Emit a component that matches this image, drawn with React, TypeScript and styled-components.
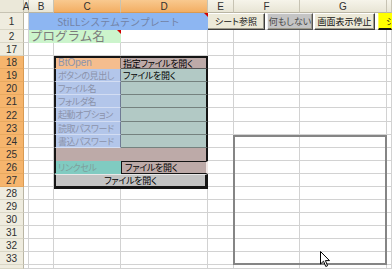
import React from "react"
import styled, { createGlobalStyle, css } from "styled-components"

const GlobalStyle = createGlobalStyle`
  html, body {
    margin: 0;
    padding: 0;
    background: #ffffff;
    overflow: hidden;
  }
`

const COLS = ["A", "B", "C", "D", "E", "F", "G", "H"]
const SELECTED_COLS = ["C", "D"]
const ROWS = [1, 2, 17, 18, 19, 20, 21, 22, 23, 24, 25, 26, 27, 28, 29, 30, 31, 32, 33, 34]
const rowHeight = (r: number) => (r === 1 ? "17px" : r === 22 ? "14px" : r === 34 ? "1fr" : "13px")

const JP = `"Noto Sans CJK JP", "Liberation Sans", sans-serif`

export default function App() {
  return (
    <>
      <GlobalStyle />
      <Sheet>
        <Corner />
        {COLS.map((c, i) => (
          <ColHeader key={c} $c={i + 2} $selected={SELECTED_COLS.includes(c)}>
            {c === "H" ? "" : c}
          </ColHeader>
        ))}
        {ROWS.map((r, ri) => (
          <React.Fragment key={r}>
            <RowHeader $r={ri + 2} $selected={r >= 18 && r <= 27}>
              {r === 34 ? "" : r}
            </RowHeader>
            {COLS.map((c, ci) => (
              <Cell key={c} $r={ri + 2} $c={ci + 2} />
            ))}
          </React.Fragment>
        ))}

        <Title>StiLLシステムテンプレート</Title>
        <ProgName>プログラム名</ProgName>

        <Toolbar>
          <SheetButton $w={58}>シート参照</SheetButton>
          <SheetButton $w={46} $kind="gray">何もしない</SheetButton>
          <SheetButton $w={61}>画面表示停止</SheetButton>
          <SheetButton $w={14} $kind="yellow">シ</SheetButton>
        </Toolbar>

        <Table>
          <Label $tone="peach" $latin>BtOpen</Label>
          <Value $tone="mauve" $first>指定ファイルを開く</Value>
          <Label $tone="blue">ボタンの見出し</Label>
          <Value $tone="teal">ファイルを開く</Value>
          <Label $tone="blue">ファイル名</Label>
          <Value $tone="teal" />
          <Label $tone="blue">フォルダ名</Label>
          <Value $tone="teal" />
          <Label $tone="blue">起動オプション</Label>
          <Value $tone="teal" />
          <Label $tone="blue">読取パスワード</Label>
          <Value $tone="teal" />
          <Label $tone="blue">書込パスワード</Label>
          <Value $tone="teal" />
          <Spacer />
          <Label $tone="link">リンクセル</Label>
          <LinkValue>ファイルを開く</LinkValue>
          <OpenButton>ファイルを開く</OpenButton>
        </Table>

        <ListFrame />
        <Cursor width="11" height="17" viewBox="0 0 11 17">
          <path d="M0.5 0.5 L0.5 13 L3.5 10.2 L5.8 15.5 L7.6 14.7 L5.4 9.6 L9.5 9.6 Z" fill="#ffffff" stroke="#000000" strokeWidth="1" />
        </Cursor>
      </Sheet>
    </>
  )
}

const Sheet = styled.div`
  position: relative;
  width: 392px;
  height: 269px;
  overflow: hidden;
  display: grid;
  grid-template-columns: 24px 5px 25px 67px 87px 26px 66px 87px 1fr;
  grid-template-rows: 13px ${ROWS.map(rowHeight).join(" ")};
  font-family: "Liberation Sans", sans-serif;
`

const headerBase = css`
  box-sizing: border-box;
  display: flex;
  align-items: center;
  justify-content: center;
  font-family: "Liberation Sans", sans-serif;
  font-size: 10px;
  color: #303030;
  border-right: 1px solid #c7c3b3;
  border-bottom: 1px solid #c7c3b3;
`

const Corner = styled.div`
  ${headerBase};
  grid-row: 1;
  grid-column: 1;
  background: #ebe8d9;
`

const ColHeader = styled.div<{ $c: number; $selected?: boolean }>`
  ${headerBase};
  grid-row: 1;
  grid-column: ${(p) => p.$c};
  background: ${(p) => (p.$selected ? "linear-gradient(#f9c98f, #f3ae63)" : "linear-gradient(#f6f4ea, #e8e5d5)")};
  border-bottom-color: ${(p) => (p.$selected ? "#d99a52" : "#b9b5a3")};
`

const RowHeader = styled.div<{ $r: number; $selected?: boolean }>`
  ${headerBase};
  grid-row: ${(p) => p.$r};
  grid-column: 1;
  padding-top: 1px;
  background: ${(p) => (p.$selected ? "#f6b56d" : "#efecdf")};
  border-right-color: ${(p) => (p.$selected ? "#d99a52" : "#b9b5a3")};
  border-bottom-color: ${(p) => (p.$selected ? "#e8a960" : "#d9d6c6")};
`

const Cell = styled.div<{ $r: number; $c: number }>`
  box-sizing: border-box;
  grid-row: ${(p) => p.$r};
  grid-column: ${(p) => p.$c};
  border-right: 1px solid #d2d2d2;
  border-bottom: 1px solid #d2d2d2;
`

const comment = css`
  &::after {
    content: "";
    position: absolute;
    top: 0;
    right: 0;
    border-top: 4px solid #d00000;
    border-left: 4px solid transparent;
  }
`

const Title = styled.div`
  position: relative;
  grid-row: 2;
  grid-column: 3 / 6;
  display: flex;
  align-items: center;
  justify-content: center;
  background: #8db6f2;
  font-family: ${JP};
  font-size: 10px;
  color: #7383a6;
  ${comment};
`

const ProgName = styled.div`
  position: relative;
  grid-row: 3;
  grid-column: 3 / 5;
  display: flex;
  align-items: center;
  padding-left: 1px;
  background: #ccf4cc;
  font-family: ${JP};
  font-size: 12.5px;
  line-height: 1;
  color: #7c7c7c;
  ${comment};
`

const Toolbar = styled.div`
  grid-row: 2;
  grid-column: 6 / 10;
  display: flex;
  align-items: stretch;
  margin-left: -1px;
  gap: 2px;
`

const SheetButton = styled.div<{ $w: number; $kind?: "gray" | "yellow" }>`
  box-sizing: border-box;
  flex: 0 0 ${(p) => p.$w}px;
  display: flex;
  align-items: center;
  justify-content: center;
  overflow: hidden;
  white-space: nowrap;
  font-family: ${JP};
  font-feature-settings: "palt" 1;
  font-size: 9px;
  color: #111;
  background: #ece9d8;
  border: 1px solid;
  border-color: #ffffff #3c3c3c #3c3c3c #ffffff;
  box-shadow: inset -1px -1px 0 #9d9a8c;
  ${(p) =>
    p.$kind === "gray" &&
    css`
      background: #c4c4c4;
      color: #4a4a4a;
      border-color: #f0f0f0 #555 #555 #f0f0f0;
      margin-right: -1px;
    `}
  ${(p) =>
    p.$kind === "yellow" &&
    css`
      margin-left: 1px;
      justify-content: flex-start;
      padding-left: 7px;
      background: #ffff00;
      border-color: #ffff00 #ffff00 #111 #ffff60;
      border-bottom-width: 2px;
      box-shadow: none;
    `}
`

const Table = styled.div`
  grid-row: 5 / 15;
  grid-column: 4 / 6;
  display: grid;
  grid-template-columns: 67px 87px;
  grid-template-rows: repeat(4, 13px) 14px repeat(5, 13px);
  margin-right: -1px;
`

const tones = {
  peach: "#f5bd8e",
  blue: "#b3c6ea",
  teal: "#b2c9c5",
  mauve: "#bdaaa8",
  link: "#80cbc1",
}

const cellText = css`
  box-sizing: border-box;
  display: flex;
  align-items: center;
  overflow: hidden;
  white-space: nowrap;
  font-family: ${JP};
  font-feature-settings: "palt" 1;
  font-size: 9px;
  line-height: 1;
`

const Label = styled.div<{ $tone: keyof typeof tones; $latin?: boolean }>`
  ${cellText};
  padding-left: 2px;
  letter-spacing: ${(p) => (p.$latin ? "0" : "-0.4px")};
  background: ${(p) => tones[p.$tone]};
  color: ${(p) => (p.$tone === "link" ? "#7e9e9b" : "#8b93ab")};
  font-family: ${(p) => (p.$latin ? `"Liberation Sans", sans-serif` : JP)};
  font-size: ${(p) => (p.$latin ? "10px" : "9px")};
  border-left: 2px solid #151515;
  border-bottom: 1px solid ${(p) => (p.$tone === "blue" ? "#d3ddf2" : "transparent")};
  border-right: 1px solid #6f7a94;
  ${(p) => p.$tone === "peach" && "border-top: 2px solid #151515; border-right-color: #7a6a60;"}
  ${(p) => p.$tone === "link" && "border-right: none;"}
`

const Value = styled.div<{ $tone: keyof typeof tones; $first?: boolean }>`
  ${cellText};
  padding-left: 2px;
  letter-spacing: -0.3px;
  background: ${(p) => tones[p.$tone]};
  color: #000;
  border-right: 2px solid #151515;
  border-bottom: 1px solid #75827f;
  ${(p) => p.$first && "border-top: 2px solid #151515; border-bottom-color: #555;"}
`

const Spacer = styled.div`
  grid-column: 1 / 3;
  background: #bdaaa8;
  border-left: 2px solid #151515;
  border-right: 2px solid #151515;
`

const LinkValue = styled.div`
  ${cellText};
  padding-left: 3px;
  letter-spacing: -0.3px;
  background: #bdaaa8;
  color: #000;
  border: 1px solid #151515;
  border-right: 2px solid #efe6e4;
`

const OpenButton = styled.div`
  ${cellText};
  grid-column: 1 / 3;
  justify-content: center;
  letter-spacing: -0.3px;
  background: #c3c3c3;
  color: #000;
  border-left: 2px solid #151515;
  border-right: 3px solid #151515;
  border-bottom: 3px solid #151515;
  border-top: 1px solid #e8e8e8;
  margin-bottom: -2px;
`

const ListFrame = styled.div`
  grid-row: 11 / 21;
  grid-column: 7 / 9;
  box-sizing: border-box;
  margin-left: -1px;
  border: 2px solid #858585;
`

const Cursor = styled.svg`
  position: absolute;
  left: 320px;
  top: 251px;
`
